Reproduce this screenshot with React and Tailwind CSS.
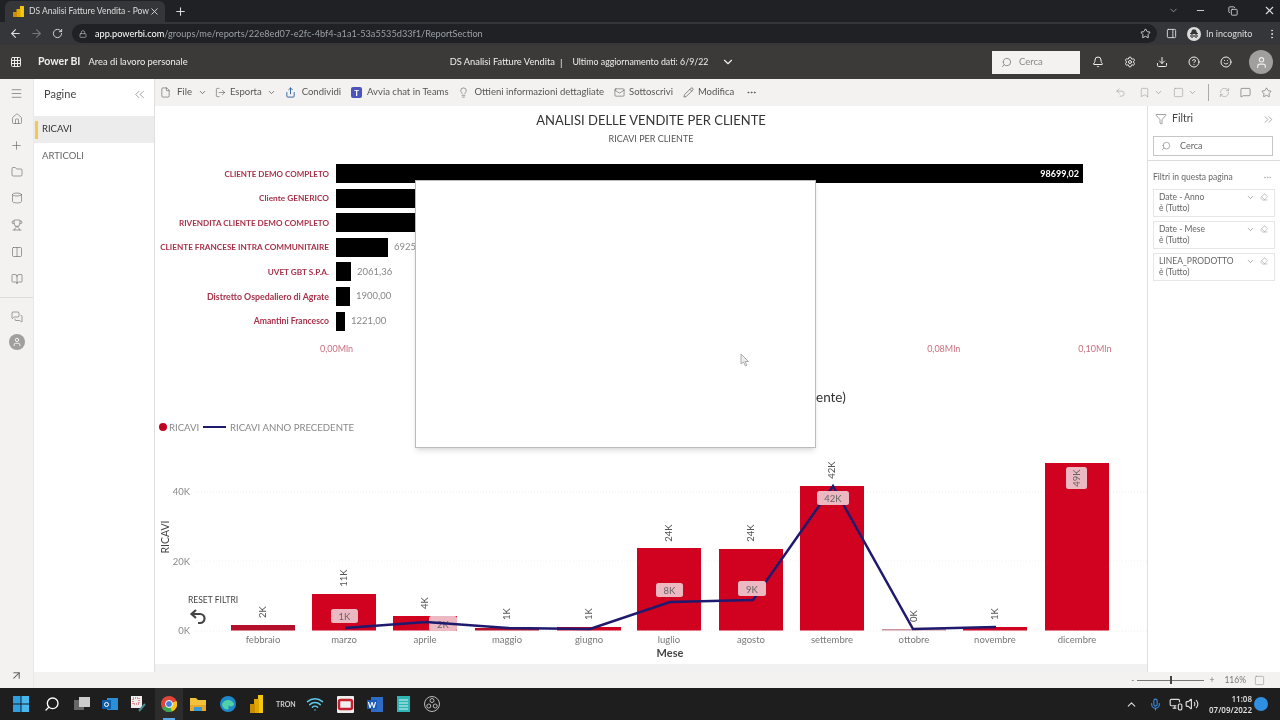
import {
  Menu, Home, Plus, Folder, Cylinder, Trophy, Columns2, BookOpen, MessagesSquare, User, ArrowUpRight,
  ChevronsLeft, ChevronsRight, ChevronDown, File, LogOut, Share, Lightbulb, Mail, Pencil, MoreHorizontal,
  Undo2, Bookmark, Square, RefreshCw, MessageSquare, Star, Filter, Search, Eraser, X, ArrowLeft, ArrowRight,
  RotateCw, Lock, Minus, Copy, PanelRight, MoreVertical, Grid3x3, Bell, Settings, Download, HelpCircle, Smile,
  ChevronUp, Mic, MonitorSmartphone, Volume2, Wifi,
} from "lucide-react";

const rows = [
  { name: "CLIENTE DEMO COMPLETO", size: "text-[8px]", w: 747, inside: "98699,02" },
  { name: "Cliente GENERICO", size: "text-[8.3px]", w: 200 },
  { name: "RIVENDITA CLIENTE DEMO COMPLETO", size: "text-[8.1px]", w: 200 },
  { name: "CLIENTE FRANCESE INTRA COMMUNITAIRE", size: "text-[8.2px]", w: 52, value: "6925" },
  { name: "UVET GBT S.P.A.", size: "text-[8.2px]", w: 15, value: "2061,36" },
  { name: "Distretto Ospedaliero di Agrate", size: "text-[8.8px]", w: 14, value: "1900,00" },
  { name: "Amantini Francesco", size: "text-[8.6px]", w: 9, value: "1221,00" },
];

const bars = [
  { m: "febbraio", x: 231, top: 625, label: "2K", ly: 612, color: "#b5102b" },
  { m: "marzo", x: 312, top: 594, label: "11K", ly: 578 },
  { m: "aprile", x: 393, top: 616, label: "4K", ly: 603 },
  { m: "maggio", x: 475, top: 628, label: "1K", ly: 614, color: "#b5102b" },
  { m: "giugno", x: 557, top: 627, label: "1K", ly: 614 },
  { m: "luglio", x: 637, top: 548, label: "24K", ly: 533 },
  { m: "agosto", x: 719, top: 549, label: "24K", ly: 533 },
  { m: "settembre", x: 800, top: 486, label: "42K", ly: 470 },
  { m: "ottobre", x: 882, top: 629, label: "0K", ly: 616, color: "#c9929c" },
  { m: "novembre", x: 963, top: 627, label: "1K", ly: 614 },
  { m: "dicembre", x: 1045, top: 463 },
];

const pinks = [
  { x: 331, y: 609, w: 27, h: 14, t: "1K" },
  { x: 429, y: 616, w: 28, h: 15, t: "2K" },
];

const overLine = [
  { x: 656, y: 583, w: 27, h: 14, t: "8K" },
  { x: 738, y: 581, w: 28, h: 15, t: "9K" },
  { x: 817, y: 491, w: 32, h: 14, t: "42K" },
];

const filters = ["Date - Anno", "Date - Mese", "LINEA_PRODOTTO"];

function Pink({ p }) {
  return (
    <g>
      <rect x={p.x} y={p.y} width={p.w} height={p.h} rx="2.5" fill="#ecb9c3" />
      <text x={p.x + p.w / 2} y={p.y + p.h - 3.5} fontSize="9.5" textAnchor="middle" fill="#666">{p.t}</text>
    </g>
  );
}

function Chart() {
  return (
    <svg viewBox="155 410 992 254" className="block w-[992px] h-[254px] shrink-0" fontFamily="Lato, sans-serif">
      <circle cx="163" cy="427" r="4" fill="#c00020" />
      <text x="169" y="431" fontSize="9.6" fill="#888">RICAVI</text>
      <line x1="203" x2="226" y1="427" y2="427" stroke="#1f1a6e" strokeWidth="2" />
      <text x="230" y="431" fontSize="9.6" fill="#888">RICAVI ANNO PRECEDENTE</text>

      <line x1="195" x2="1147" y1="492" y2="492" stroke="#eee" strokeDasharray="1 2" />
      <line x1="195" x2="1147" y1="561" y2="561" stroke="#eee" strokeDasharray="1 2" />
      <line x1="195" x2="1147" y1="631" y2="631" stroke="#eee" strokeDasharray="1 2" />
      <text x="190" y="495" fontSize="9.5" textAnchor="end" fill="#888">40K</text>
      <text x="190" y="565" fontSize="9.5" textAnchor="end" fill="#888">20K</text>
      <text x="190" y="634" fontSize="9.5" textAnchor="end" fill="#888">0K</text>
      <text transform="translate(169 537) rotate(-90)" textAnchor="middle" fontSize="10.5" fill="#444">RICAVI</text>

      {bars.map((b) => (
        <g key={b.m}>
          <rect x={b.x} y={b.top} width="64" height={630.5 - b.top} fill={b.color || "#d0021f"} />
          <text x={b.x + 32} y="643" fontSize="9.5" textAnchor="middle" fill="#777">{b.m}</text>
          {b.label && (
            <text transform={`translate(${b.x + 35} ${b.ly}) rotate(-90)`} textAnchor="middle" fontSize="9.5" fill="#555">
              {b.label}
            </text>
          )}
        </g>
      ))}
      <text x="670" y="657" fontSize="11" fontWeight="700" textAnchor="middle" fill="#444">Mese</text>

      {pinks.map((p) => <Pink key={p.t} p={p} />)}
      <rect x="1066" y="467" width="21" height="22" rx="2.5" fill="#ecb9c3" />
      <text transform="translate(1080 478) rotate(-90)" fontSize="9.5" textAnchor="middle" fill="#666">49K</text>

      <polyline
        points="345,628 426,622 508,628 590,629 670,602 753,600 833,486 913,629 996,627"
        fill="none"
        stroke="#1f1a6e"
        strokeWidth="2.5"
      />
      {overLine.map((p) => <Pink key={p.t} p={p} />)}

      <text x="188" y="603" fontSize="8.5" fill="#444">RESET FILTRI</text>
      <path d="M196 610 l-4.500 4 l4.500 4 M192 614 h8 a4.500 4.500 0 0 1 0 9 h-2" fill="none" stroke="#444" strokeWidth="2.2" />
    </svg>
  );
}

function Taskbar() {
  return (
    <div className="h-[32px] shrink-0 bg-[#1e1e1e] flex items-center pl-[13px] text-white">
      <svg width="16" height="16" viewBox="0 0 16 16" className="mr-[15px]">
        <rect width="7.500" height="7.500" fill="#2f9fe0" />
        <rect x="8.500" width="7.500" height="7.500" fill="#47b8ee" />
        <rect y="8.500" width="7.500" height="7.500" fill="#2f9fe0" />
        <rect x="8.500" y="8.500" width="7.500" height="7.500" fill="#47b8ee" />
      </svg>
      <Search size={16} className="mr-[14px] -scale-x-100" />
      <svg width="16" height="14" viewBox="0 0 16 14" className="mr-[12px]">
        <rect y="3" width="10" height="10" fill="#666" />
        <rect x="5" width="11" height="10" fill="#ccc" />
      </svg>
      <svg width="16" height="16" viewBox="0 0 16 16" className="mr-[12px]">
        <rect x="5" y="2" width="11" height="12" fill="#2b8fd8" />
        <rect y="4" width="9" height="9" fill="#0f5ea8" />
        <circle cx="4.500" cy="8.500" r="2" fill="none" stroke="#fff" />
      </svg>
      <svg width="16" height="16" viewBox="0 0 16 16" className="mr-[8px] ml-[1px]">
        <rect width="11" height="12" fill="#eee" />
        <rect x="2" y="2" width="6" height="6" fill="none" stroke="#c33" strokeDasharray="1 1" />
        <path d="M8 15 L14 8" stroke="#4a8f8f" strokeWidth="2" />
      </svg>
      <div className="w-[28px] h-[32px] bg-[#2c2c2c] flex items-center justify-center mr-[7px] relative">
        <svg width="16" height="16" viewBox="0 0 16 16">
          <circle cx="8" cy="8" r="8" fill="#e0453a" />
          <path d="M8 8 L1 12 A8 8 0 0 0 11 15.500 Z" fill="#3aa655" />
          <path d="M8 8 L11 15.500 A8 8 0 0 0 15.500 5 Z" fill="#f5c518" />
          <circle cx="8" cy="8" r="3.500" fill="#3f7fe0" stroke="#fff" />
        </svg>
        <div className="absolute bottom-0 left-[8px] w-[12px] h-[2px] bg-[#5aa9e6]" />
      </div>
      <svg width="16" height="14" viewBox="0 0 16 14" className="mr-[14px]">
        <path d="M0 1 h6 l2 2 h8 v11 H0 Z" fill="#f2c23c" />
        <rect y="8" width="16" height="6" fill="#e8a92a" />
        <rect x="4" y="10" width="8" height="4" fill="#3a9ad9" />
      </svg>
      <svg width="16" height="16" viewBox="0 0 16 16" className="mr-[13px]">
        <circle cx="8" cy="8" r="8" fill="#1e88c9" />
        <path d="M2 9 C3 3 12 2 14 8 C14 11 9 11 8 9 C11 15 4 15 2 9 Z" fill="#4fd3a6" />
      </svg>
      <svg width="14" height="18" viewBox="0 0 14 18" className="mr-[13px]">
        <rect x="9" width="5" height="18" fill="#f2c811" />
        <rect x="5" y="4" width="5" height="14" fill="#e0a800" />
        <rect x="1" y="9" width="5" height="9" fill="#c98f00" />
      </svg>
      <span className="w-[16px] mr-[14px] text-[7px] text-center font-bold text-[#ccc] font-['Lato',sans-serif]">TRON</span>
      <Wifi size={18} className="text-[#5ec8e8] mr-[13px]" />
      <svg width="17" height="17" viewBox="0 0 17 17" className="mr-[13px]">
        <rect width="17" height="17" rx="1" fill="#eee" />
        <rect x="2" y="4" width="13" height="9" rx="1.500" fill="none" stroke="#c5202c" strokeWidth="2.500" />
      </svg>
      <svg width="16" height="15" viewBox="0 0 16 15" className="mr-[14px]">
        <rect x="4" width="12" height="15" fill="#2f6dc4" />
        <rect y="3" width="10" height="9" fill="#185abd" />
        <text x="5" y="10.500" fontSize="8" fontWeight="700" fill="#fff" textAnchor="middle">W</text>
      </svg>
      <svg width="13" height="16" viewBox="0 0 13 16" className="mr-[14px]">
        <rect width="13" height="16" fill="#2fb5b5" />
        <path d="M2 4 h9 M2 7 h9 M2 10 h9 M2 13 h9" stroke="#d8f5f5" />
      </svg>
      <svg width="16" height="16" viewBox="0 0 16 16" fill="none" stroke="#bbb">
        <circle cx="8" cy="8" r="7.500" />
        <circle cx="8" cy="4.500" r="2" />
        <circle cx="4.800" cy="10" r="2" />
        <circle cx="11.200" cy="10" r="2" />
      </svg>
      <div className="ml-auto flex items-center text-[#ddd] font-['Noto_Sans',sans-serif]">
        <ChevronUp size={13} className="mr-[11px]" />
        <Mic size={13} className="text-[#3f8ee0] mr-[7px]" />
        <MonitorSmartphone size={14} className="mr-[2px]" />
        <Volume2 size={14} className="mr-[10px]" />
        <div className="flex flex-col items-end text-[8px] leading-[11px] font-semibold">
          <span>11:08</span>
          <span>07/09/2022</span>
        </div>
        <div className="w-[14px] h-[14px] rounded-full bg-[#2f8fe0] ml-[2px] mr-[12px]" />
      </div>
    </div>
  );
}

export default function App() {
  return (
    <div className="w-[1280px] h-[720px] overflow-hidden flex flex-col bg-white font-['Lato',sans-serif] relative blur-[0.4px]">
      {/* chrome tabs */}
      <div className="h-[22px] shrink-0 bg-[#202124] flex items-end text-[#ddd]">
        <div className="ml-[5px] w-[160px] h-[21px] bg-[#35363a] rounded-t-md flex items-center pl-[8px] pr-[4px]">
          <svg width="11" height="11" viewBox="0 0 11 11">
            <rect x="7" width="4" height="11" fill="#f2c811" />
            <rect x="3.500" y="3" width="4" height="8" fill="#e0a800" />
            <rect y="6" width="4" height="5" fill="#c98f00" />
          </svg>
          <span className="ml-[5px] text-[8.5px] whitespace-nowrap">DS Analisi Fatture Vendita - Pow</span>
          <X size={11} className="ml-auto mr-[1px]" />
        </div>
        <Plus size={13} className="ml-[9px] mb-[4px]" />
        <div className="ml-auto flex items-center gap-[20px] mb-[5px] mr-[4px]">
          <ChevronDown size={11} className="text-[#999]" />
          <Minus size={11} className="-ml-[4px]" />
          <Copy size={10} className="ml-[2px]" />
          <X size={13} className="ml-[5px]" />
        </div>
      </div>

      {/* address bar */}
      <div className="h-[23px] shrink-0 bg-[#35363a] flex items-center text-[#ddd]">
        <ArrowLeft size={13} className="ml-[9px]" />
        <ArrowRight size={13} className="ml-[8px] text-[#777]" />
        <RotateCw size={11} className="ml-[9px]" />
        <div className="ml-[9px] w-[1085px] h-[19px] rounded-full bg-[#202124] flex items-center pl-[7px]">
          <Lock size={8} className="text-[#bbb]" />
          <span className="ml-[8px] text-[9.2px] text-white">app.powerbi.com</span>
          <span className="text-[9.2px] text-[#9aa0a6]">/groups/me/reports/22e8ed07-e2fc-4bf4-a1a1-53a5535d33f1/ReportSection</span>
          <Star size={11} className="ml-auto mr-[6px]" />
        </div>
        <PanelRight size={11} className="ml-[9px]" />
        <svg width="14" height="14" viewBox="0 0 14 14" className="ml-[10px]">
          <circle cx="7" cy="7" r="7" fill="#ddd" />
          <path d="M3 6.500 h8 M4.500 6 L5.500 3 h3 L9.500 6" fill="#333" stroke="#333" />
          <circle cx="5" cy="9" r="1.300" fill="none" stroke="#333" />
          <circle cx="9" cy="9" r="1.300" fill="none" stroke="#333" />
        </svg>
        <span className="ml-[5px] text-[9px] whitespace-nowrap">In incognito</span>
        <MoreVertical size={12} className="ml-auto mr-[2px]" />
      </div>

      {/* power bi header */}
      <div className="h-[34px] shrink-0 bg-[#3b3a39] flex items-center text-[#eee] whitespace-nowrap">
        <Grid3x3 size={12} className="ml-[10px]" />
        <span className="ml-[16px] text-[10.5px] font-bold">Power BI</span>
        <span className="ml-[8px] text-[9.4px]">Area di lavoro personale</span>
        <span className="ml-[262px] text-[9.3px]">DS Analisi Fatture Vendita</span>
        <span className="ml-[5px] text-[10px]">|</span>
        <span className="ml-[10px] text-[8.8px]">Ultimo aggiornamento dati: 6/9/22</span>
        <ChevronDown size={14} className="ml-[13px]" />
        <div className="ml-auto w-[88px] h-[23px] bg-[#f3f2f1] flex items-center pl-[9px] text-[#888]">
          <Search size={11} className="-scale-x-100" />
          <span className="ml-[7px] text-[9.5px]">Cerca</span>
        </div>
        <Bell size={12} className="ml-[12px]" />
        <Settings size={12} className="ml-[20px]" />
        <Download size={12} className="ml-[20px]" />
        <HelpCircle size={12} className="ml-[20px]" />
        <Smile size={12} className="ml-[20px]" />
        <div className="ml-[17px] mr-[7px] w-[24px] h-[24px] rounded-full bg-[#a19f9d] flex items-center justify-center">
          <User size={13} />
        </div>
      </div>

      <div className="flex-1 min-h-0 flex">
        {/* left rail */}
        <div className="w-[34px] shrink-0 bg-[#f3f2f1] flex flex-col items-center text-[#666] border-r border-[#e8e8e8]">
          <Menu size={13} strokeWidth={1.25} className="mt-[8px]" />
          <Home size={12} strokeWidth={1.25} className="mt-[13px]" />
          <Plus size={13} strokeWidth={1.25} className="mt-[14px]" />
          <Folder size={12} strokeWidth={1.25} className="mt-[14px]" />
          <Cylinder size={12} strokeWidth={1.25} className="mt-[14px]" />
          <Trophy size={12} strokeWidth={1.25} className="mt-[15px]" />
          <Columns2 size={12} strokeWidth={1.25} className="mt-[15px]" />
          <BookOpen size={12} strokeWidth={1.25} className="mt-[15px]" />
          <div className="w-full h-px bg-[#ddd] mt-[12px]" />
          <MessagesSquare size={12} strokeWidth={1.25} className="mt-[13px]" />
          <div className="mt-[11px] w-[16px] h-[16px] rounded-full bg-[#a19f9d] flex items-center justify-center text-white">
            <User size={10} />
          </div>
          <ArrowUpRight size={13} className="mt-auto mb-[6px]" />
        </div>

        <div className="flex-1 min-w-0 flex flex-col">
          <div className="flex-1 min-h-0 flex">
            {/* pages */}
            <div className="w-[121px] shrink-0 bg-white border-r border-[#e1dfdd]">
              <div className="h-[37px] flex items-center pl-[10px] pr-[7px] pb-[6px] bg-white">
                <span className="text-[11px] text-[#444]">Pagine</span>
                <ChevronsLeft size={15} strokeWidth={1} className="ml-auto text-[#666]" />
              </div>
              <div className="h-[27px] bg-[#ececec] flex items-center pl-[1px]">
                <div className="w-[3px] h-[18px] bg-[#f2c94c]" />
                <span className="ml-[4px] text-[9.5px] text-[#333]">RICAVI</span>
              </div>
              <div className="h-[24px] mt-[1px] flex items-center pl-[8px] text-[9.5px] text-[#666]">ARTICOLI</div>
            </div>

            <div className="flex-1 min-w-0 flex flex-col">
              {/* toolbar */}
              <div className="h-[27px] shrink-0 bg-[#f3f2f1] flex items-center text-[9.5px] text-[#555]">
                <File size={11} strokeWidth={1.25} className="ml-[5px]" />
                <span className="ml-[6px]">File</span>
                <ChevronDown size={9} className="ml-[6px]" />
                <LogOut size={11} strokeWidth={1.25} className="ml-[8px]" />
                <span className="ml-[4px]">Esporta</span>
                <ChevronDown size={9} className="ml-[5px]" />
                <Share size={11} className="ml-[9px] text-[#2b5f9e]" />
                <span className="ml-[6px]">Condividi</span>
                <div className="ml-[10px] w-[11px] h-[11px] rounded-[2px] bg-[#4b53bc] flex items-center justify-center text-[8px] font-bold text-white">T</div>
                <span className="ml-[5px]">Avvia chat in Teams</span>
                <Lightbulb size={11} strokeWidth={1.25} className="ml-[9px]" />
                <span className="ml-[6px]">Ottieni informazioni dettagliate</span>
                <Mail size={11} strokeWidth={1.25} className="ml-[10px]" />
                <span className="ml-[4px]">Sottoscrivi</span>
                <Pencil size={11} strokeWidth={1.5} className="ml-[10px]" />
                <span className="ml-[4px]">Modifica</span>
                <MoreHorizontal size={11} className="ml-[12px]" />
                <div className="ml-auto flex items-center text-[#999] mr-[8px]">
                  <Undo2 size={11} strokeWidth={1.25} />
                  <Bookmark size={11} strokeWidth={1.25} className="ml-[13px]" />
                  <ChevronDown size={9} className="ml-[4px]" />
                  <Square size={11} strokeWidth={1.25} className="ml-[10px]" />
                  <ChevronDown size={9} className="ml-[4px]" />
                  <div className="w-px h-[17px] bg-[#aaa] ml-[11px]" />
                  <RefreshCw size={11} strokeWidth={1.25} className="ml-[10px]" />
                  <MessageSquare size={11} strokeWidth={1.25} className="ml-[10px] text-[#555]" />
                  <Star size={11} strokeWidth={1.25} className="ml-[10px] text-[#555]" />
                </div>
              </div>

              <div className="flex-1 min-h-0 flex">
                {/* canvas */}
                <div className="w-[992px] shrink-0 bg-[#f1f1f1] flex flex-col relative">
                  <div className="bg-white flex flex-col">
                    <div className="h-[58px] flex flex-col items-center">
                      <span className="mt-[4px] text-[13px] leading-[20px] text-[#333]">ANALISI DELLE VENDITE PER CLIENTE</span>
                      <span className="mt-[2px] text-[9px] leading-[13px] text-[#555]">RICAVI PER CLIENTE</span>
                    </div>
                    {rows.map((r) => (
                      <div key={r.name} className="h-[24.6px] flex items-start">
                        <div className={`w-[174px] h-[19px] flex items-center justify-end font-bold text-[#a8324a] whitespace-nowrap ${r.size}`}>
                          {r.name}
                        </div>
                        <div
                          className="ml-[7px] h-[19px] bg-black flex items-center justify-end pr-[4px] text-[9px] font-bold text-white"
                          style={{ width: r.w }}
                        >
                          {r.inside}
                        </div>
                        {r.value && (
                          <span className="ml-[6px] h-[19px] flex items-center text-[9.5px] text-[#888]">{r.value}</span>
                        )}
                      </div>
                    ))}
                    <div className="h-[24.8px] flex items-center text-[9px] text-[#c9707f]">
                      <span className="ml-[165px]">0,00Mln</span>
                      <span className="ml-[574px]">0,08Mln</span>
                      <span className="ml-[118px]">0,10Mln</span>
                    </div>
                    <div className="h-[49px] flex items-center pt-[24px] pl-[661px] text-[13.5px] text-[#333]">ente)</div>
                    <Chart />
                  </div>

                  {/* popup window over the report */}
                  <div className="absolute left-[260px] top-[74px] w-[401px] h-[268px] bg-white border border-[#bbb] shadow-md" />
                  <svg width="10" height="14" viewBox="0 0 10 14" className="absolute left-[585px] top-[247px]">
                    <path d="M1 1 V11 L3.500 9 L5.500 13 L7 12 L5 8.500 H8.500 Z" fill="#eee" stroke="#999" strokeWidth="0.8" />
                  </svg>
                </div>

                {/* filters */}
                <div className="flex-1 min-w-0 bg-white border-l border-[#e1dfdd] flex flex-col text-[#666]">
                  <div className="h-[30px] flex items-center pl-[7px] pr-[5px] pb-[4px]">
                    <Filter size={12} strokeWidth={1.25} />
                    <span className="ml-[5px] text-[10.5px] text-[#444]">Filtri</span>
                    <ChevronsRight size={13} strokeWidth={1} className="ml-auto" />
                  </div>
                  <div className="mx-[5px] w-[120px] h-[20px] border border-[#c8c6c4] flex items-center pl-[7px]">
                    <Search size={10} strokeWidth={1.25} className="-scale-x-100" />
                    <span className="ml-[9px] text-[9px]">Cerca</span>
                  </div>
                  <div className="h-px bg-[#ddd] mt-[4px]" />
                  <div className="flex items-center mt-[10px] pl-[5px] pr-[8px] text-[8.5px]">
                    Filtri in questa pagina
                    <MoreHorizontal size={9} className="ml-auto text-[#aaa]" />
                  </div>
                  <div className="mt-[5px] flex flex-col gap-[4px] pl-[5px] w-[127px]">
                    {filters.map((f) => (
                      <div key={f} className="h-[28px] border border-[#e8e6e4] pl-[5px] pr-[6px] pt-[2px] text-[8.5px] leading-[11px]">
                        <div className="flex items-center">
                          <span>{f}</span>
                          <ChevronDown size={9} className="ml-auto text-[#888]" />
                          <Eraser size={8} className="ml-[5px] text-[#aaa]" />
                        </div>
                        <div>è (Tutto)</div>
                      </div>
                    ))}
                  </div>
                </div>
              </div>
            </div>
          </div>

          {/* status bar */}
          <div className="h-[16px] shrink-0 bg-[#f3f2f1] flex items-center justify-end text-[8.5px] text-[#777]">
            <span>-</span>
            <div className="ml-[3px] w-[67px] h-px bg-[#777] flex items-center justify-center">
              <div className="w-[2px] h-[8px] bg-[#444]" />
            </div>
            <span className="ml-[5px]">+</span>
            <span className="ml-[10px]">116%</span>
            <Square size={11} strokeWidth={1} className="ml-[8px] mr-[15px]" />
          </div>
        </div>
      </div>

      <Taskbar />
    </div>
  );
}
